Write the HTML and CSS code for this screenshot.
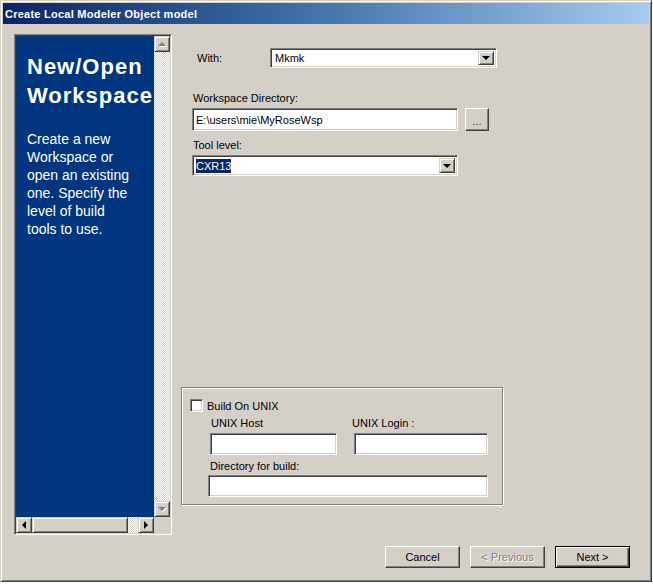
FILE: index.html
```html
<!DOCTYPE html>
<html>
<head>
<meta charset="utf-8">
<title>Create Local Modeler Object model</title>
<link rel="stylesheet" href="styles.css">
</head>
<body>
<div class="window">
  <div class="titlebar"><span class="title">Create Local Modeler Object model</span></div>
  <div class="main">
    <div class="panel">
      <div class="panel-view">
        <div class="blue">
          <div class="heading"><span class="line">New/Open</span><span class="line">Workspace</span></div>
          <div class="desc">
            <span class="line">Create a new</span>
            <span class="line">Workspace or</span>
            <span class="line">open an existing</span>
            <span class="line">one. Specify the</span>
            <span class="line">level of build</span>
            <span class="line">tools to use.</span>
          </div>
        </div>
        <div class="vscroll">
          <div class="sbtn"><span class="tri tri-up dis"></span></div>
          <div class="track"></div>
          <div class="sbtn"><span class="tri tri-down dis"></span></div>
        </div>
      </div>
      <div class="hrow">
        <div class="hscroll">
          <div class="sbtn"><span class="tri tri-left"></span></div>
          <div class="thumb"></div>
          <div class="track"></div>
          <div class="sbtn"><span class="tri tri-right"></span></div>
        </div>
        <div class="corner"></div>
      </div>
    </div>

    <div class="form">
      <div class="row-with">
        <span class="lbl-with">With:</span>
        <div class="combo combo-with">
          <span class="combo-text">Mkmk</span>
          <span class="dd"><span class="tri tri-down"></span></span>
        </div>
      </div>

      <div class="lbl lbl-dir">Workspace Directory:</div>
      <div class="row-dir">
        <div class="field field-dir"><span class="field-text">E:\users\mie\MyRoseWsp</span></div>
        <div class="btn btn-browse">...</div>
      </div>

      <div class="lbl lbl-tool">Tool level:</div>
      <div class="combo combo-tool">
        <span class="combo-text"><span class="sel">CXR13</span></span>
        <span class="dd"><span class="tri tri-down"></span></span>
      </div>

      <div class="group">
        <div class="chk-row">
          <span class="checkbox"></span>
          <span class="chk-label">Build On UNIX</span>
        </div>
        <div class="unix-row">
          <div class="col col-host">
            <div class="lbl lbl-host">UNIX Host</div>
            <div class="field field-host"></div>
          </div>
          <div class="col col-login">
            <div class="lbl lbl-login">UNIX Login :</div>
            <div class="field field-login"></div>
          </div>
        </div>
        <div class="lbl lbl-build">Directory for build:</div>
        <div class="field field-build"></div>
      </div>
    </div>
  </div>

  <div class="buttons">
    <div class="btn btn-std">Cancel</div>
    <div class="btn btn-std disabled">&lt; Previous</div>
    <div class="btn btn-std default">Next &gt;</div>
  </div>
</div>
</body>
</html>
```
FILE: styles.css
```css
* { box-sizing: border-box; }

html, body {
  margin: 0;
  padding: 0;
  background: #ffffff;
}

body {
  width: 653px;
  height: 586px;
  overflow: hidden;
  font-family: "Liberation Sans", Arial, sans-serif;
  font-size: 11px;
  color: #000;
}

.window {
  width: 652px;
  height: 582px;
  background: #d4d0c8;
  border: 1px solid;
  border-color: #d4d0c8 #404040 #404040 #d4d0c8;
  box-shadow: inset 1px 1px #ffffff, inset -1px -1px #808080;
  padding: 2px;
  display: flex;
  flex-direction: column;
}

.titlebar {
  height: 21px;
  flex: none;
  background: linear-gradient(to right, #0a246a 0%, #3a6ea5 45%, #a6caf0 100%);
  display: flex;
  align-items: center;
  padding-left: 2px;
}

.title {
  color: #ffffff;
  font-weight: bold;
  font-size: 11px;
  letter-spacing: 0.25px;
}

.main {
  height: 522px;
  flex: none;
  display: flex;
}

/* ---------- left panel ---------- */
.panel {
  margin-left: 11px;
  margin-top: 10px;
  width: 158px;
  height: 501px;
  border: 1px solid;
  border-color: #808080 #ffffff #ffffff #808080;
  box-shadow: inset 1px 1px #404040, inset -1px -1px #d4d0c8;
  padding: 1px;
  display: flex;
  flex-direction: column;
}

.panel-view {
  height: 481px;
  display: flex;
}

.blue {
  flex: 1;
  background: #003580;
  color: #ffffff;
  padding: 16px 0 0 11px;
  overflow: hidden;
}

.line { display: block; white-space: nowrap; }

.heading {
  font-family: "Liberation Sans", Arial, sans-serif;
  font-weight: bold;
  font-size: 22px;
  letter-spacing: 1px;
  line-height: 29px;
}

.desc {
  margin-top: 20px;
  font-size: 14px;
  line-height: 18px;
}

.vscroll {
  width: 16px;
  display: flex;
  flex-direction: column;
}

.track {
  flex: 1;
  background: repeating-conic-gradient(#d4d0c8 0 25%, #ffffff 0 50%) 0 0 / 2px 2px;
}

.sbtn {
  width: 16px;
  height: 16px;
  flex: none;
  background: #d4d0c8;
  border: 1px solid;
  border-color: #d4d0c8 #404040 #404040 #d4d0c8;
  box-shadow: inset 1px 1px #ffffff, inset -1px -1px #808080;
  display: flex;
  align-items: center;
  justify-content: center;
}

.hrow {
  height: 16px;
  display: flex;
}

.hscroll {
  flex: 1;
  display: flex;
}

.thumb {
  width: 96px;
  height: 16px;
  background: #d4d0c8;
  border: 1px solid;
  border-color: #d4d0c8 #404040 #404040 #d4d0c8;
  box-shadow: inset 1px 1px #ffffff, inset -1px -1px #808080;
}

.corner {
  width: 16px;
  background: #d4d0c8;
}

/* triangles */
.tri { width: 0; height: 0; display: block; }
.tri-up {
  border-left: 4px solid transparent;
  border-right: 4px solid transparent;
  border-bottom: 4px solid #000;
}
.tri-down {
  border-left: 4px solid transparent;
  border-right: 4px solid transparent;
  border-top: 4px solid #000;
}
.tri-left {
  border-top: 4px solid transparent;
  border-bottom: 4px solid transparent;
  border-right: 4px solid #000;
}
.tri-right {
  border-top: 4px solid transparent;
  border-bottom: 4px solid transparent;
  border-left: 4px solid #000;
}
.tri-up.dis { border-bottom-color: #808080; filter: drop-shadow(1px 1px 0 #ffffff); }
.tri-down.dis { border-top-color: #808080; filter: drop-shadow(1px 1px 0 #ffffff); }

/* ---------- form ---------- */
.form {
  flex: 1;
  display: flex;
  flex-direction: column;
  align-items: flex-start;
}

.lbl {
  height: 13px;
  line-height: 13px;
  white-space: nowrap;
}

.row-with {
  margin-top: 24px;
  display: flex;
  align-items: center;
}

.lbl-with {
  margin-left: 25px;
  width: 73px;
}

.field {
  background: #ffffff;
  border: 1px solid;
  border-color: #808080 #ffffff #ffffff #808080;
  box-shadow: inset 1px 1px #404040, inset -1px -1px #d4d0c8;
}

.combo {
  background: #ffffff;
  border: 1px solid;
  border-color: #808080 #ffffff #ffffff #808080;
  box-shadow: inset 1px 1px #404040, inset -1px -1px #d4d0c8;
  padding: 1px;
  display: flex;
  align-items: stretch;
}

.combo-with {
  width: 227px;
  height: 20px;
  padding: 2px;
}

.combo-text {
  flex: 1;
  display: flex;
  align-items: center;
  padding-left: 2px;
  white-space: nowrap;
}

.dd {
  width: 16px;
  flex: none;
  background: #d4d0c8;
  border: 1px solid;
  border-color: #d4d0c8 #404040 #404040 #d4d0c8;
  box-shadow: inset 1px 1px #ffffff, inset -1px -1px #808080;
  display: flex;
  align-items: center;
  justify-content: center;
}

.lbl-dir {
  margin-top: 24px;
  margin-left: 21px;
}

.row-dir {
  margin-top: 3px;
  margin-left: 20px;
  display: flex;
}

.field-dir {
  width: 266px;
  height: 23px;
  display: flex;
  align-items: center;
  padding-left: 3px;
}

.field-text { white-space: nowrap; }

.btn {
  background: #d4d0c8;
  border: 1px solid;
  border-color: #ffffff #404040 #404040 #ffffff;
  box-shadow: inset -1px -1px #808080;
  display: flex;
  align-items: center;
  justify-content: center;
  white-space: nowrap;
}

.btn-browse {
  margin-left: 7px;
  width: 24px;
  height: 23px;
  color: #404040;
  padding-top: 2px;
}

.lbl-tool {
  margin-top: 8px;
  margin-left: 21px;
}

.combo-tool {
  margin-top: 3px;
  margin-left: 20px;
  width: 266px;
  height: 21px;
  padding: 2px;
}

.combo-tool .combo-text { padding-left: 1px; }

.sel {
  background: #0a246a;
  color: #ffffff;
  line-height: 14px;
}

/* ---------- group ---------- */
.group {
  margin-top: 211px;
  margin-left: 9px;
  width: 322px;
  height: 118px;
  border: 1px solid #808080;
  box-shadow: inset 1px 1px #ffffff, 1px 1px 0 #ffffff;
  display: flex;
  flex-direction: column;
  align-items: flex-start;
}

.chk-row {
  margin-top: 11px;
  padding-left: 8px;
  height: 13px;
  display: flex;
  align-items: center;
}

.checkbox {
  width: 13px;
  height: 13px;
  background: #ffffff;
  border: 1px solid;
  border-color: #808080 #ffffff #ffffff #808080;
  box-shadow: inset 1px 1px #404040, inset -1px -1px #d4d0c8;
}

.chk-label { margin-left: 4px; }

.unix-row {
  margin-top: 5px;
  display: flex;
}

.col { display: flex; flex-direction: column; }

.col-host { margin-left: 28px; width: 127px; }
.col-login { margin-left: 17px; width: 134px; }

.lbl-host { padding-left: 1px; }
.lbl-login { margin-left: -2px; }

.field-host, .field-login {
  margin-top: 3px;
  height: 22px;
}

.lbl-build {
  margin-top: 5px;
  margin-left: 28px;
}

.field-build {
  margin-top: 2px;
  margin-left: 26px;
  width: 280px;
  height: 22px;
}

/* ---------- buttons ---------- */
.buttons {
  height: 22px;
  flex: none;
  display: flex;
  justify-content: flex-end;
  gap: 10px;
  padding-right: 19px;
}

.btn-std {
  width: 75px;
  height: 22px;
}

.btn-std.disabled {
  color: #808080;
  text-shadow: 1px 1px 0 #ffffff;
}

.btn-std.default {
  border-color: #000000;
  box-shadow: inset 1px 1px #ffffff, inset -1px -1px #404040, inset -2px -2px #808080;
}
```
